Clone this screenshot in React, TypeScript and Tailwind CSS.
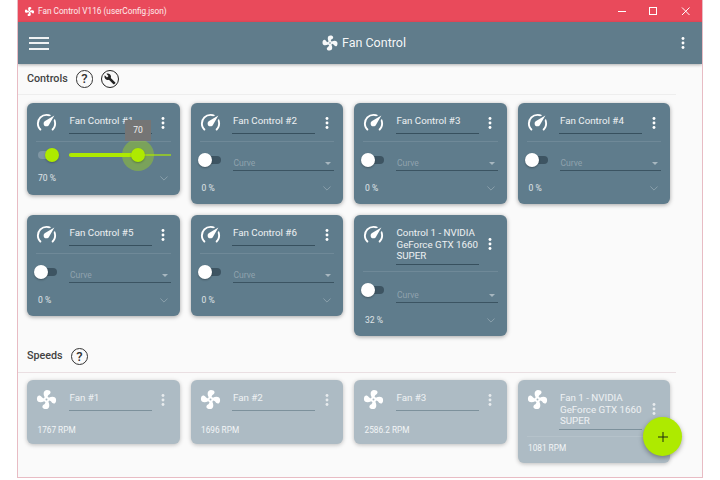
import React from "react";

const FAN = "M12,11A1,1 0 0,0 11,12A1,1 0 0,0 12,13A1,1 0 0,0 13,12A1,1 0 0,0 12,11M12.5,2C17,2 17.11,5.57 14.75,6.75C13.76,7.24 13.32,8.29 13.13,9.22C13.61,9.42 14.03,9.73 14.35,10.13C18.05,8.13 22.03,8.92 22.03,12.5C22.03,17 18.46,17.1 17.28,14.73C16.78,13.74 15.72,13.3 14.79,13.11C14.59,13.59 14.28,14 13.88,14.34C15.87,18.03 15.08,22 11.5,22C7,22 6.91,18.42 9.27,17.24C10.25,16.75 10.69,15.71 10.89,14.79C10.4,14.59 9.97,14.27 9.65,13.87C5.96,15.85 2,15.07 2,11.5C2,7 5.56,6.89 6.74,9.26C7.24,10.25 8.29,10.68 9.22,10.87C9.41,10.39 9.73,9.97 10.14,9.65C8.15,5.96 8.94,2 12.5,2Z";
const GAUGE = "M12,16A3,3 0 0,1 9,13C9,11.88 9.61,10.9 10.5,10.39L20.21,4.77L14.68,14.35C14.18,15.33 13.17,16 12,16M12,3C13.81,3 15.5,3.5 16.97,4.32L14.87,5.53C14,5.19 13,5 12,5A8,8 0 0,0 4,13C4,15.21 4.89,17.21 6.34,18.65H6.35C6.74,19.04 6.74,19.67 6.35,20.06C5.96,20.45 5.32,20.45 4.93,20.07V20.07C3.12,18.26 2,15.76 2,13A10,10 0 0,1 12,3M22,13C22,15.76 20.88,18.26 19.07,20.07V20.07C18.68,20.45 18.05,20.45 17.66,20.06C17.27,19.67 17.27,19.04 17.66,18.65V18.65C19.11,17.2 20,15.21 20,13C20,12 19.81,11 19.46,10.1L20.67,8C21.5,9.5 22,11.19 22,13Z";
const WRENCH = "M22.7,19L13.6,9.9C14.5,7.6 14,4.9 12.1,3C10.1,1 7.1,0.6 4.7,1.7L9,6L6,9L1.6,4.7C0.4,7.1 0.9,10.1 2.9,12.1C4.8,14 7.5,14.5 9.8,13.6L18.9,22.7C19.3,23.1 19.9,23.1 20.3,22.7L22.6,20.4C23.1,20 23.1,19.3 22.7,19Z";

function Icon({ d, className }: { d: string; className: string }) {
  return (
    <svg viewBox="0 0 24 24" className={className} fill="currentColor">
      <path d={d} />
    </svg>
  );
}

function Dots({ className }: { className: string }) {
  return (
    <svg viewBox="0 0 4 12" className={className} fill="currentColor">
      <circle cx="2" cy="1.5" r="1.45" />
      <circle cx="2" cy="6" r="1.45" />
      <circle cx="2" cy="10.5" r="1.45" />
    </svg>
  );
}

function Header({ name, icon, muted }: { name: string; icon: string; muted?: boolean }) {
  return (
    <div className="flex items-start">
      <Icon d={icon} className="w-[23px] h-[23px] mt-2 ml-2 shrink-0 text-white" />
      <div
        className={`ml-[10.5px] w-[83px] min-h-[31px] pt-[12px] pb-[2px] pl-[1px] border-b text-[9.75px] leading-[11.5px] ${
          muted ? "border-[#7d919c] text-white/80" : "border-[#37505e] text-white/90"
        }`}
      >
        {name}
      </div>
      <div className="self-stretch pt-2 ml-[9.5px] flex items-center">
        <Dots className={`w-[4px] h-[12px] ${muted ? "text-white/70" : "text-white"}`} />
      </div>
    </div>
  );
}

function Divider() {
  return <div className="mt-[6.5px] mx-[9px] h-px bg-white/10" />;
}

function Footer({ value }: { value: string }) {
  return (
    <div className="h-[33px] pt-[1px] flex items-center justify-between pl-[11px] pr-[12px]">
      <span className="text-[8.5px] text-white/80">{value}</span>
      <svg viewBox="0 0 10 6" className="w-[8px] h-[5px] text-white/35" fill="none" stroke="currentColor" strokeWidth="1">
        <path d="M0.5 0.5L5 5L9.5 0.5" />
      </svg>
    </div>
  );
}

function ControlCard({ name, value, tall }: { name: string; value: string; tall?: boolean }) {
  return (
    <div className="w-[152.5px] rounded-md bg-[#5f7c8c] shadow-[0_1px_4px_rgba(0,0,0,0.35)]">
      <Header name={name} icon={GAUGE} />
      <Divider />
      <div className={`flex items-start ${tall ? "h-[31px]" : "h-[29.5px]"}`}>
        <div className="relative ml-[11px] mt-[14px] w-[19px] h-[8px] rounded-full bg-[#3d5462]">
          <div className="absolute -left-[4px] -top-[3px] w-[14px] h-[14px] rounded-full bg-white shadow-[0_1px_2px_rgba(0,0,0,0.3)]" />
        </div>
        <div
          className={`ml-[12px] mr-[9px] flex-1 border-b border-[#3b5462] flex items-center justify-between pt-[2px] pr-[3px] ${
            tall ? "mt-[14px] h-[17px]" : "mt-[12.5px] h-[17px]"
          }`}
        >
          <span className="text-[8.5px] text-white/30 pl-[1px]">Curve</span>
          <span className="w-0 h-0 border-x-[3px] border-x-transparent border-t-[3px] border-t-white/45" />
        </div>
      </div>
      <Footer value={value} />
    </div>
  );
}

function ActiveCard() {
  return (
    <div className="relative w-[152.5px] rounded-md bg-[#5f7c8c] shadow-[0_1px_4px_rgba(0,0,0,0.35)]">
      <Header name="Fan Control #1" icon={GAUGE} />
      <Divider />
      <div className="flex items-start h-[20px]">
        <div className="relative ml-[11px] mt-[9px] w-[19px] h-[8px] rounded-full bg-white/20">
          <div className="absolute right-[-2px] -top-[3px] w-[14px] h-[14px] rounded-full bg-[#aeea00] shadow-[0_1px_2px_rgba(0,0,0,0.25)]" />
        </div>
        <div className="relative ml-[12px] mt-[12.5px] w-[102px] h-[2px] bg-[#aeea00]/60">
          <div className="absolute left-0 -top-[1px] w-[69px] h-[4px] rounded-full bg-[#aeea00]" />
          <div className="absolute left-[53px] -top-[15px] w-[32px] h-[32px] rounded-full bg-[#aeea00]/35" />
          <div className="absolute left-[62px] -top-[6px] w-[14px] h-[14px] rounded-full bg-[#aeea00] shadow-[0_1px_2px_rgba(0,0,0,0.25)]" />
          <div className="absolute left-[56px] -top-[34px] w-[26px] h-[21px] bg-[#757575] text-white/90 text-[8.5px] flex items-center justify-center">
            70
          </div>
        </div>
      </div>
      <Footer value="70 %" />
    </div>
  );
}

function SpeedCard({ name, value, divider }: { name: string; value: string; divider?: boolean }) {
  return (
    <div className="w-[152.5px] rounded-md bg-[#adbbc4] shadow-[0_1px_4px_rgba(0,0,0,0.25)]">
      <Header name={name} icon={FAN} muted />
      {divider ? <Divider /> : <div className="h-[7.5px]" />}
      <div className="h-[25.5px] pl-[10.5px] pb-[3px] flex items-center text-[8.25px] text-white/85">{value}</div>
    </div>
  );
}

function HelpCircle() {
  return (
    <div className="w-[17.5px] h-[17.5px] rounded-full border-[1.3px] border-[#333] flex items-center justify-center text-[13px] text-[#333]">
      ?
    </div>
  );
}

export default function App() {
  return (
    <div className="w-[720px] h-[480px] bg-white px-[17px] font-['Roboto',sans-serif] overflow-hidden">
      <div className="relative h-[478px] border-x border-b border-[#e8bcc4] flex flex-col bg-[#fafafa] overflow-hidden">
        <div className="h-[22px] shrink-0 bg-[#e94a5b] text-white flex items-center pl-[6px] pr-[10px]">
          <Icon d={FAN} className="w-[11px] h-[11px]" />
          <span className="ml-[3px] text-[8.25px] text-white/90">Fan Control V116 (userConfig.json)</span>
          <div className="flex-1" />
          <svg viewBox="0 0 74 12" className="w-[74px] h-[12px]" fill="none" stroke="currentColor" strokeWidth="1">
            <path d="M0 6.5H8" />
            <rect x="31.5" y="2.5" width="7" height="7" />
            <path d="M64 2.5L71.5 10M71.5 2.5L64 10" />
          </svg>
        </div>
        <div className="h-[42px] shrink-0 bg-[#607c8b] text-white flex items-center justify-between pl-[11px] pr-[17px] shadow-[0_1px_3px_rgba(0,0,0,0.3)] z-10">
          <div className="flex flex-col gap-[3.5px]">
            <div className="w-[20px] h-[2px] bg-white/90" />
            <div className="w-[20px] h-[2px] bg-white/90" />
            <div className="w-[20px] h-[2px] bg-white/90" />
          </div>
          <div className="flex items-center gap-[3px] text-[12.5px] text-white/95 mr-[3px]">
            <Icon d={FAN} className="w-[18px] h-[18px]" />
            <span>Fan Control</span>
          </div>
          <Dots className="w-[4px] h-[12px]" />
        </div>
        <div className="w-[658px] flex flex-col">
          <div className="h-[30px] pl-[9px] flex items-center gap-[8px] text-[10.75px] font-medium text-[#424242]">
            <span>Controls</span>
            <HelpCircle />
            <div className="w-[17.5px] h-[17.5px] rounded-full border-[1.3px] border-[#222] flex items-center justify-center">
              <Icon d={WRENCH} className="w-[12px] h-[12px] text-[#222]" />
            </div>
          </div>
          <div className="h-px bg-[#eeeeee]" />
          <div className="pl-[9px] pt-[8px] flex flex-wrap items-start content-start gap-[11px]">
            <ActiveCard />
            <ControlCard name="Fan Control #2" value="0 %" />
            <ControlCard name="Fan Control #3" value="0 %" />
            <ControlCard name="Fan Control #4" value="0 %" />
            <ControlCard name="Fan Control #5" value="0 %" />
            <ControlCard name="Fan Control #6" value="0 %" />
            <ControlCard name="Control 1 - NVIDIA GeForce GTX 1660 SUPER" value="32 %" tall />
          </div>
          <div className="h-[35.5px] pt-[5px] pl-[9px] flex items-center gap-[8px] text-[10.75px] font-medium text-[#424242]">
            <span>Speeds</span>
            <HelpCircle />
          </div>
          <div className="h-px bg-[#eadfe2]" />
          <div className="pl-[9px] pt-[7.5px] flex items-start gap-[11px]">
            <SpeedCard name="Fan #1" value="1767 RPM" />
            <SpeedCard name="Fan #2" value="1696 RPM" />
            <SpeedCard name="Fan #3" value="2586.2 RPM" />
            <SpeedCard name="Fan 1 - NVIDIA GeForce GTX 1660 SUPER" value="1081 RPM" divider />
          </div>
        </div>
        <div className="absolute left-[625px] top-[417px] w-[39px] h-[39px] rounded-full bg-[#aeea00] shadow-[0_2px_5px_rgba(0,0,0,0.35)] flex items-center justify-center">
          <svg viewBox="0 0 10 10" className="w-[10px] h-[10px] text-[#1c2a10]" fill="none" stroke="currentColor" strokeWidth="1">
            <path d="M5 0V10M0 5H10" />
          </svg>
        </div>
      </div>
    </div>
  );
}
